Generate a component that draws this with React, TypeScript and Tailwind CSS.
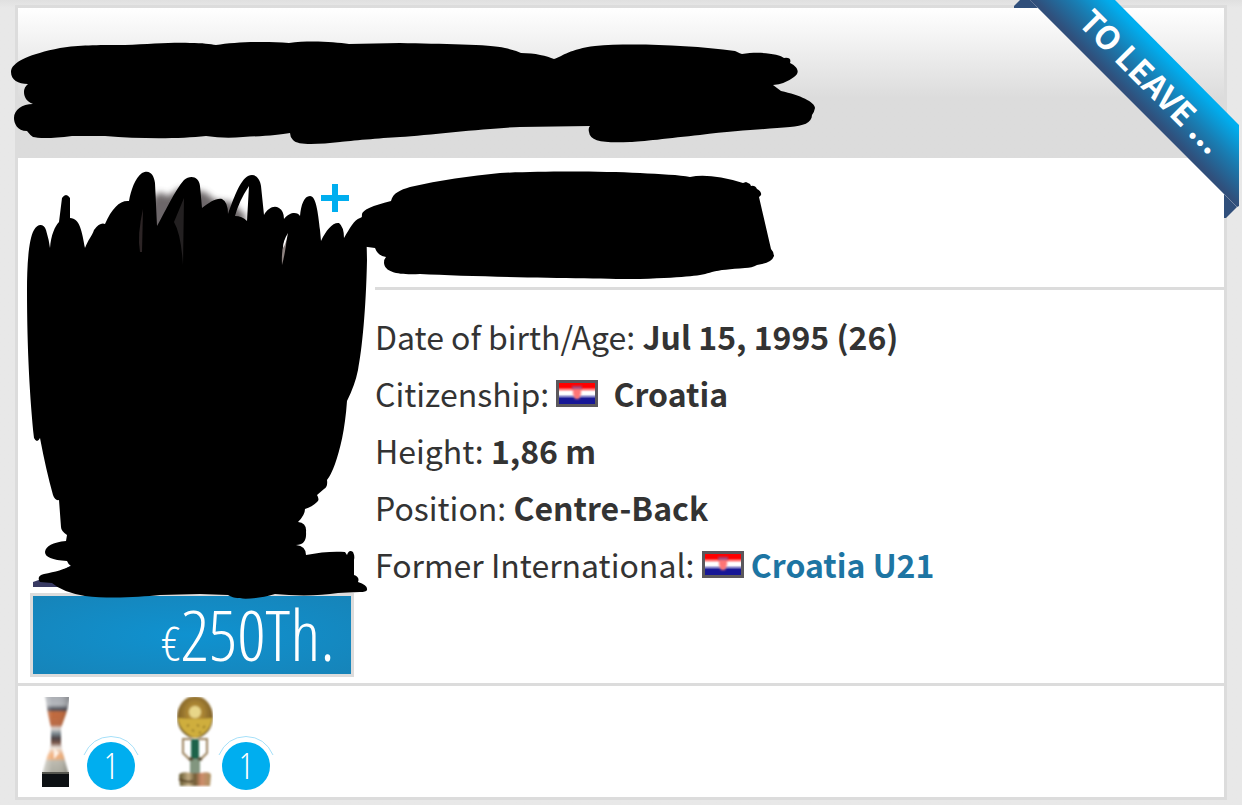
import type { ReactNode } from "react";

const Flag = () => (
  <svg
    viewBox="0 0 36 21"
    preserveAspectRatio="none"
    role="img"
    aria-label="Croatia"
    className="inline-block h-[27px] w-[42px] border-3 border-[#5b585c] align-baseline"
  >
    <defs>
      <linearGradient id="flag" x1="0" y1="0" x2="0" y2="1">
        <stop offset="0.2" stopColor="#ff0000" />
        <stop offset="0.42" stopColor="#ffffff" />
        <stop offset="0.54" stopColor="#ffffff" />
        <stop offset="0.74" stopColor="#171796" />
      </linearGradient>
      <filter id="soft">
        <feGaussianBlur stdDeviation="0.9" />
      </filter>
    </defs>
    <rect width="36" height="21" fill="url(#flag)" />
    <g filter="url(#soft)">
      <path d="M14 6h8v5l-2 5h-4l-2-5z" fill="#ff7474" />
      <path d="M13 3h10v3H13z" fill="#9a4a80" />
    </g>
  </svg>
);

const SupercupIcon = () => (
  <svg viewBox="0 0 27 90" className="h-[90px] w-[27px]" aria-hidden="true">
    <defs>
      <linearGradient id="cup" x1="0" y1="0" x2="0" y2="1">
        <stop offset="0" stopColor="#a9acb2" />
        <stop offset="0.12" stopColor="#b4b7bc" />
        <stop offset="0.18" stopColor="#4d4e57" />
        <stop offset="0.22" stopColor="#c26a3c" />
        <stop offset="0.37" stopColor="#b96b45" />
        <stop offset="0.42" stopColor="#dcd6d2" />
        <stop offset="0.48" stopColor="#7d8b93" />
        <stop offset="0.54" stopColor="#4b4345" />
        <stop offset="0.6" stopColor="#7b5648" />
        <stop offset="0.66" stopColor="#eee6df" />
        <stop offset="0.74" stopColor="#f2b585" />
        <stop offset="0.79" stopColor="#f0b07c" />
        <stop offset="0.83" stopColor="#bdbbb0" />
        <stop offset="1" stopColor="#a9a89d" />
      </linearGradient>
      <linearGradient id="cupShade">
        <stop offset="0" stopColor="#ffffff" stopOpacity="0.5" />
        <stop offset="0.35" stopColor="#ffffff" stopOpacity="0" />
        <stop offset="0.7" stopColor="#333333" stopOpacity="0.05" />
        <stop offset="1" stopColor="#333333" stopOpacity="0.35" />
      </linearGradient>
      <filter id="cupSoft">
        <feGaussianBlur stdDeviation="0.8" />
      </filter>
    </defs>
    <g filter="url(#cupSoft)">
      <path d="M3 -2H29L24 17L19 31V47Q20 54 22 60L27 78H0L5 60Q8 54 9 47V31L6 17Z" fill="url(#cup)" />
      <path d="M3 -2H29L24 17L19 31V47Q20 54 22 60L27 78H0L5 60Q8 54 9 47V31L6 17Z" fill="url(#cupShade)" />
      <path d="M12 51l5 5-5 6z" fill="#fff3e6" />
    </g>
    <path d="M0 75H27V78H0z" fill="#55564f" />
    <path d="M0 77H27V90H0z" fill="#0d1114" />
  </svg>
);

const CupIcon = () => (
  <svg viewBox="0 0 36 90" className="h-[90px] w-9" aria-hidden="true">
    <defs>
      <radialGradient id="ball" cx="0.5" cy="0.4" r="0.6">
        <stop offset="0" stopColor="#e8d27c" />
        <stop offset="0.3" stopColor="#b08a35" />
        <stop offset="0.7" stopColor="#8a6a2b" />
        <stop offset="1" stopColor="#6d5423" />
      </radialGradient>
      <linearGradient id="base">
        <stop offset="0" stopColor="#5e532b" />
        <stop offset="0.3" stopColor="#c3ad83" />
        <stop offset="0.5" stopColor="#6e5a34" />
        <stop offset="0.7" stopColor="#cf8d6b" />
        <stop offset="1" stopColor="#a99060" />
      </linearGradient>
      <filter id="ballSoft">
        <feGaussianBlur stdDeviation="0.9" />
      </filter>
    </defs>
    <g filter="url(#ballSoft)">
      <ellipse cx="18" cy="20" rx="18" ry="21" fill="url(#ball)" />
      <path d="M1 21Q18 23 35 21Q34 35 18 41Q3 35 1 21z" fill="#cfae3c" />
      <circle cx="18" cy="15" r="6" fill="#e8d689" />
      <path d="M10 29l2-1M15 33l2 1M20 28l2 1M26 31l2-2M22 36l2-1" stroke="#8a6f22" strokeWidth="1.500" />
      <path d="M14 42H22V62H14z" fill="#1c6448" />
      <path d="M13 62H23V78H13z" fill="#82967f" />
      <path d="M14 42L6 42L6 56L13 63M22 42L30 42L30 56L23 63" fill="none" stroke="#9c845e" strokeWidth="2" />
      <path d="M12 62h4M21 62h4" stroke="#514226" strokeWidth="3" />
      <path d="M2 78Q4 74 14 76H24Q33 74 34 78L33 89H3z" fill="url(#base)" />
      <path d="M2 82q8 4 14 2" fill="none" stroke="#5a4527" strokeWidth="2" />
    </g>
  </svg>
);

const Trophy = ({ label, count, children }: { label: string; count: number; children: ReactNode }) => (
  <a href="#honours" aria-label={label} className="flex w-[135px] items-end">
    <span className="mb-[3px] w-[45px]">{children}</span>
    <span className="relative flex h-12 w-12 items-center justify-center rounded-full bg-[#00aeef] font-['Open_Sans_Condensed_Light','Open_Sans',sans-serif] text-[36px] leading-[48px] text-white">
      {count}
      <svg viewBox="0 0 60 60" className="absolute -top-[6px] -left-[6px] h-[60px] w-[60px]" aria-hidden="true">
        <path d="M3 19Q11 1 30 0.500Q49 1 57 19" fill="none" stroke="#a6e0f9" strokeWidth="1" />
      </svg>
    </span>
  </a>
);

const Row = ({ label, children }: { label: string; children: ReactNode }) => (
  <div>
    <dt className="inline">{label}</dt> <dd className="inline font-bold">{children}</dd>
  </div>
);

const Ribbon = () => (
  <div className="absolute -top-2 -right-[15px] h-[218px] w-[225px]">
    <svg viewBox="0 0 225 218" className="h-full w-full" aria-hidden="true">
      <defs>
        <linearGradient id="ribbon" gradientUnits="userSpaceOnUse" x1="80" y1="64" x2="122" y2="22">
          <stop offset="0.05" stopColor="#304f7b" />
          <stop offset="0.5" stopColor="#1a7bb0" />
          <stop offset="0.95" stopColor="#00aeef" />
        </linearGradient>
      </defs>
      <path d="M6 0H17L24 8H0V6z" fill="#304f7b" />
      <path d="M210 194L223 207L212 218H210z" fill="#304f7b" />
      <path d="M16 0H101L225 125V206L223 207z" fill="url(#ribbon)" />
      <path d="M16 0L223 207" stroke="#8794ad" strokeWidth="0.500" />
    </svg>
    <span className="absolute top-16 left-11 w-[190px] rotate-45 text-center text-[32px] leading-[32px] font-bold whitespace-nowrap text-white">
      TO LEAVE ...
    </span>
  </div>
);

const NameMark = () => (
  <svg viewBox="8 38 812 112" className="absolute top-[30px] -left-[10px] h-[112px] w-[812px]" aria-hidden="true">
    <path d="M11 72C11 62 30 54 60 48C80 45 95 45 125 45C150 44 175 42 190 43C203 43 210 44 216 45C235 42 265 41 289 43C310 40 335 42 349 44L400 43C440 44 490 44 505 48Q515 50 521 53C535 53 547 56 554 59C563 56 570 49 595 46C630 43 690 45 735 51Q741 54 742 54C760 51 780 54 784 58Q792 57 790 63C800 68 799 74 794 77Q785 84 773 85L781 91C800 95 815 102 815 108Q814 113 812 115C812 123 803 126 790 127C770 129 740 130 700 135C670 138 640 142 630 142C605 143 590 142 589 132Q588 128 590 126L520 127C490 128 430 135 400 137C380 138 350 141 340 142C320 144 298 146 293 140Q290 137 290 133C280 135 265 136 243 137Q225 139 206 136C180 139 140 139 105 136L72 136C50 139 37 138 33 137Q30 135 27 131C17 131 14 123 14 118C14 110 22 104 33 104C25 101 24 95 24 92Q24 87 28 84C18 84 11 80 11 72Z" />
  </svg>
);

const ClubMark = () => (
  <svg viewBox="355 168 425 116" className="absolute top-[10px] -left-5 h-[116px] w-[425px]" aria-hidden="true">
    <path d="M362 214Q363 208 391 201C393 193 400 190 410 187C440 180 470 176 500 173C540 171 600 171 640 173C660 174 680 175 690 177Q710 173 743 183L746 182L750 184L751 186Q755 185 757 189C761 191 763 195 759 197L771 249Q774 252 774 256Q772 262 762 264L757 265Q752 268 745 268C730 269 720 270 712 272C700 276 690 277 640 279C600 279 480 277 420 274C400 275 385 273 384 263Q384 259 386 257Q378 256 375 248L360 246Z" />
  </svg>
);

const PhotoMark = () => (
  <svg viewBox="20 165 350 440" className="absolute top-[7px] -left-[10px] h-[440px] w-[350px]" aria-hidden="true">
    <defs>
      <filter id="hair" x="-30%" y="-30%" width="160%" height="160%">
        <feGaussianBlur stdDeviation="3" />
      </filter>
    </defs>
    <path d="M135 238L152 198L160 192L168 196L180 188L205 192L215 200L232 202L246 216L240 240z" fill="#4a4345" opacity="0.8" filter="url(#hair)" />
    <path d="M33 585V582Q55 575 72 565V587H33z" fill="#383a62" />
    <path
      fillRule="evenodd"
      d="M27 290C27 270 28 240 34 230C38 223 44 224 46 230Q49 240 50 248C51 235 55 226 59 222L62 198Q66 192 70 198L70 218C80 218 82 232 85 248C88 240 92 236 94 230Q100 222 105 224C112 208 120 200 129 201C131 190 135 178 142 173C150 169 154 175 155 183L157 226C165 212 175 190 184 180C190 175 199 176 200 186L202 208C210 202 216 198 222 199Q228 202 228 214C233 200 240 180 248 176C255 173 260 178 261 186L264 215C268 208 274 205 279 208Q284 211 284 219C290 211 298 212 300 216C301 205 304 196 310 196C316 196 318 212 320 230L321 241C326 230 333 222 339 223Q344 227 344 238C350 228 354 220 360 218L366 215L367 260C366 310 362 350 358 370Q355 385 347 401C345 430 340 450 335 464Q331 475 327 480Q328 487 324 489L317 495Q320 500 317 502Q312 507 305 509Q305 515 298 522Q307 523 306 532Q307 545 296 545Q306 546 306 555C320 552 335 551 345 552L347 555Q349 549 353 552Q355 556 354 560L354 575Q360 577 358 582Q368 585 367 590Q366 592 360 592L338 593C320 596 295 596 275 594C255 600 235 600 228 595L200 594L160 595C140 597 110 599 85 596Q62 592 52 583L40 582Q36 576 44 574C55 572 65 569 71 566Q68 564 67 561C52 560 45 557 45 552Q46 543 66 541L67 535Q61 531 61 527L59 500Q55 501 53 495Q46 470 40 438Q37 444 34 438C30 400 27 350 27 290ZM249 186Q239 201 235 216Q242 216 247 221Z"
    />
    <path d="M143 209Q137 235 140 252H142z" fill="#2c2425" />
    <path d="M184 198L174 222Q181 234 183 265z" fill="#232021" />
    <path d="M287 236Q281 245 282 265Q286 250 287 236z" fill="#8d8280" />
    <path d="M288 233Q283 241 283 248Q286 244 288 233z" fill="#ffffff" />
  </svg>
);

export default function App() {
  return (
    <div className="min-h-screen bg-[#e8e8e8] bg-linear-to-b from-[#e0e0e0] to-[#e8e8e8] to-[8px] px-[15px] py-[5px] font-['Noto_Sans_CJK_SC',sans-serif] text-[32px] leading-[57px] text-[#333333]">
      <main className="relative border-3 border-[#dcdcdc] bg-white">
        <header className="relative h-[150px] bg-linear-to-b from-white to-[#dcdcdc] to-60%">
          <NameMark />
        </header>

        <section className="flex gap-[21px] border-b-3 border-[#dcdcdc] pl-3">
          <div className="relative flex w-[324px] shrink-0 flex-col justify-end pt-[435px] pb-[6px]">
            <a
              href="#market-value"
              className="flex h-[84px] items-center justify-end border-3 border-[#dcdcdc] bg-radial from-[#0f92d0] to-[#1684b9] pt-[6px] pr-4 font-['Open_Sans_Condensed_Light','Open_Sans',sans-serif] text-[71px] leading-[78px] text-white"
            >
              <span>
                <span className="text-[48px]">€</span>250Th.
              </span>
            </a>
            <PhotoMark />
            <button type="button" aria-label="Show more" className="absolute top-[26px] right-[5px]">
              <svg viewBox="0 0 28 28" className="h-7 w-7" aria-hidden="true">
                <path d="M0 14H28M14 0V28" stroke="#00aeef" strokeWidth="6" />
              </svg>
            </button>
          </div>

          <div className="min-w-0 flex-1">
            <div className="relative h-[132px] border-b-3 border-[#dcdcdc]">
              <ClubMark />
            </div>
            <dl className="pt-[18px]">
              <Row label="Date of birth/Age:">Jul 15, 1995 (26)</Row>
              <Row label="Citizenship:">
                <Flag /> <span className="ml-2">Croatia</span>
              </Row>
              <Row label="Height:">1,86 m</Row>
              <Row label="Position:">Centre-Back</Row>
              <Row label="Former International:">
                <Flag />{" "}
                <a href="#croatia-u21" className="text-[#1d75a3]">
                  Croatia U21
                </a>
              </Row>
            </dl>
          </div>
        </section>

        <section className="flex pt-[11px] pb-[7px] pl-6">
          <Trophy label="Supercup winner" count={1}>
            <SupercupIcon />
          </Trophy>
          <Trophy label="Cup winner" count={1}>
            <CupIcon />
          </Trophy>
        </section>

        <Ribbon />
      </main>
    </div>
  );
}
